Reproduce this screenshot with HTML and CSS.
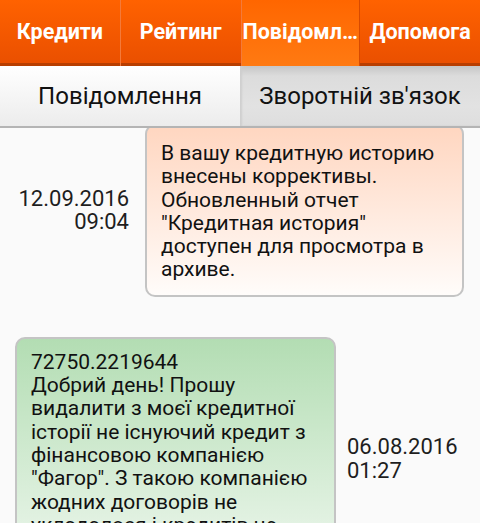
FILE: index.html
```html
<!DOCTYPE html>
<html lang="uk">
<head>
<meta charset="utf-8">
<title>Повідомлення</title>
<link rel="stylesheet" href="styles.css">
</head>
<body>
<div class="screen">
  <nav class="tabs">
    <div class="tab">Кредити</div>
    <div class="tab">Рейтинг</div>
    <div class="tab tab-active">Повідомлення</div>
    <div class="tab">Допомога</div>
  </nav>
  <div class="subtabs">
    <div class="subtab subtab-active">Повідомлення</div>
    <div class="subtab">Зворотній зв'язок</div>
  </div>
  <div class="list">
    <div class="row row-in">
      <div class="date date-right">12.09.2016<br>09:04</div>
      <div class="bubble bubble-in">В вашу кредитную историю внесены коррективы. Обновленный отчет "Кредитная история" доступен для просмотра в архиве.</div>
    </div>
    <div class="row row-out">
      <div class="bubble bubble-out">72750.2219644<br>Добрий день! Прошу видалити з моєї кредитної історії не існуючий кредит з фінансовою компанією "Фагор". З такою компанією жодних договорів не укладалося і кредитів не брала. Дякую.</div>
      <div class="date">06.08.2016<br>01:27</div>
    </div>
  </div>
</div>
</body>
</html>
```

FILE: styles.css
```css
html, body {
  margin: 0;
  padding: 0;
}
body {
  font-family: Roboto, "Noto Sans", "Liberation Sans", sans-serif;
  background: #fafafa;
  width: 480px;
  height: 523px;
  overflow: hidden;
}
.screen {
  display: flex;
  flex-direction: column;
  height: 523px;
}
.tabs {
  display: flex;
  height: 66px;
  flex: none;
}
.tab {
  flex: 1 1 0;
  min-width: 0;
  display: flex;
  align-items: center;
  justify-content: center;
  padding: 0 2px 3px;
  box-sizing: border-box;
  color: #fff;
  font-weight: bold;
  font-size: 21.5px;
  white-space: nowrap;
  overflow: hidden;
  text-overflow: ellipsis;
  background: linear-gradient(#ff6200, #e94f00);
  box-shadow: inset 0 -3px 0 #b83e00;
  border-right: 1px solid #f47a3a;
}
.tab:last-child {
  border-right: none;
}
.tab-active {
  display: block;
  line-height: 63px;
  text-align: center;
  padding: 0 1px;
  background: linear-gradient(#ff6600, #ff7a12);
  box-shadow: none;
  border-right: 1px solid #d84a00;
}
.subtabs {
  display: flex;
  height: 62px;
  flex: none;
  position: relative;
  z-index: 1;
}
.subtab {
  flex: 1 1 0;
  display: flex;
  align-items: center;
  justify-content: center;
  font-size: 24px;
  color: #111;
  background: linear-gradient(#c6c6c6 0, #dcdcdc 10px, #e2e2e2 40px, #dedede);
  border-bottom: 2px solid #b4b4b4;
  box-shadow: inset 2px 0 2px #cfcfcf;
}
.subtab-active {
  background: linear-gradient(#ffffff, #ececec);
  box-shadow: none;
}
.list {
  flex: 1;
  overflow: hidden;
  display: flex;
  flex-direction: column;
  gap: 40px;
}
.row {
  display: flex;
  align-items: center;
  flex: none;
}
.row-in {
  justify-content: flex-end;
  margin-top: -4px;
  padding-right: 16px;
  gap: 16px;
}
.row-out {
  padding-left: 15px;
  gap: 11px;
}
.date {
  font-size: 22px;
  line-height: 23.3px;
  color: #1e1e1e;
}
.date-right {
  text-align: right;
}
.bubble {
  box-sizing: border-box;
  border: 2px solid #c4c4c4;
  border-radius: 10px;
  font-size: 21px;
  line-height: 23.3px;
  color: #111;
}
.bubble-in {
  width: 319px;
  padding: 16px 14px 13px;
  background: linear-gradient(#ffd6c0, #fffcfa);
}
.bubble-out {
  width: 321px;
  padding: 12px 14px 18px;
  background: linear-gradient(#b3ddb3, #f0f8f0);
}
```
